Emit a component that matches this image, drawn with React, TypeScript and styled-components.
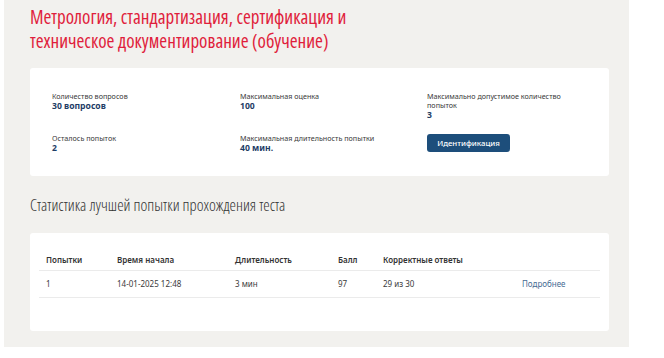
import React from "react";
import styled, { createGlobalStyle } from "styled-components";

const Global = createGlobalStyle`
  html, body { margin: 0; padding: 0; background: #ffffff; }
  body { font-family: "Noto Sans", "Open Sans", sans-serif; }
  * { box-sizing: border-box; }
`;

const Page = styled.div`
  margin-left: 4px;
  width: 625px;
  height: 347px;
  background: #f2f1ee;
  padding: 5px 20px 0 26px;
  display: flex;
  flex-direction: column;
`;

const Title = styled.h1`
  margin: 0;
  font-family: "Open Sans", "Roboto", sans-serif;
  font-stretch: 80%;
  font-weight: 500;
  font-size: 19px;
  line-height: 24px;
  color: #e01e3c;
  max-width: 360px;
`;

const Card = styled.div<{ $h: number; $mt: number }>`
  margin-top: ${(p) => p.$mt}px;
  background: #ffffff;
  border-radius: 3px;
  height: ${(p) => p.$h}px;
`;

const InfoGrid = styled.div`
  display: grid;
  grid-template-columns: 188px 187px 1fr;
  row-gap: 14px;
  padding: 24px 0 0 22px;
`;

const Field = styled.div`
  display: flex;
  flex-direction: column;
  align-items: flex-start;
`;

const Label = styled.div<{ $max?: number }>`
  font-size: 7.2px;
  line-height: 9px;
  color: #3a3a3a;
  max-width: ${(p) => (p.$max ? `${p.$max}px` : "none")};
  white-space: ${(p) => (p.$max ? "normal" : "nowrap")};
`;

const Value = styled.div`
  font-size: 8.6px;
  line-height: 10px;
  font-weight: 700;
  color: #1e3d66;
`;

const Button = styled.button`
  width: 83px;
  height: 18px;
  border: none;
  border-radius: 3px;
  background: #1d4e7b;
  color: #ffffff;
  font-family: "Noto Sans", sans-serif;
  font-size: 7.8px;
  font-weight: 500;
  padding: 0;
  cursor: pointer;
`;

const SubTitle = styled.h2`
  margin: 17px 0 0;
  font-family: "Open Sans", "Roboto", sans-serif;
  font-stretch: 80%;
  font-weight: 300;
  font-size: 16.3px;
  line-height: 24px;
  color: #333333;
`;

const Table = styled.table`
  margin: 17px 9px 0 9px;
  width: calc(100% - 18px);
  border-collapse: collapse;
  font-size: 8px;
  color: #3a3a3a;
`;

const Th = styled.th<{ $w?: number }>`
  text-align: left;
  font-weight: 600;
  height: 20px;
  padding: 0 0 0 7px;
  width: ${(p) => (p.$w ? `${p.$w}px` : "auto")};
  border-bottom: 1px solid #ebebeb;
  color: #333333;
`;

const Td = styled.td`
  height: 27px;
  padding: 0 0 0 7px;
  border-bottom: 1px solid #ebebeb;
`;

const Link = styled.a`
  color: #466b93;
  text-decoration: none;
`;

export default function App() {
  return (
    <>
      <Global />
      <Page>
        <Title>
          Метрология, стандартизация, сертификация и техническое
          документирование (обучение)
        </Title>
        <Card $h={108} $mt={15}>
          <InfoGrid>
            <Field>
              <Label>Количество вопросов</Label>
              <Value>30 вопросов</Value>
            </Field>
            <Field>
              <Label>Максимальная оценка</Label>
              <Value>100</Value>
            </Field>
            <Field>
              <Label $max={140}>Максимально допустимое количество попыток</Label>
              <Value>3</Value>
            </Field>
            <Field>
              <Label>Осталось попыток</Label>
              <Value>2</Value>
            </Field>
            <Field>
              <Label>Максимальная длительность попытки</Label>
              <Value>40 мин.</Value>
            </Field>
            <Field>
              <Button>Идентификация</Button>
            </Field>
          </InfoGrid>
        </Card>
        <SubTitle>Статистика лучшей попытки прохождения теста</SubTitle>
        <Card $h={98} $mt={16}>
          <Table>
            <thead>
              <tr>
                <Th $w={71}>Попытки</Th>
                <Th $w={118}>Время начала</Th>
                <Th $w={103}>Длительность</Th>
                <Th $w={45}>Балл</Th>
                <Th $w={139}>Корректные ответы</Th>
                <Th></Th>
              </tr>
            </thead>
            <tbody>
              <tr>
                <Td>1</Td>
                <Td>14-01-2025 12:48</Td>
                <Td>3 мин</Td>
                <Td>97</Td>
                <Td>29 из 30</Td>
                <Td>
                  <Link href="#">Подробнее</Link>
                </Td>
              </tr>
            </tbody>
          </Table>
        </Card>
      </Page>
    </>
  );
}
